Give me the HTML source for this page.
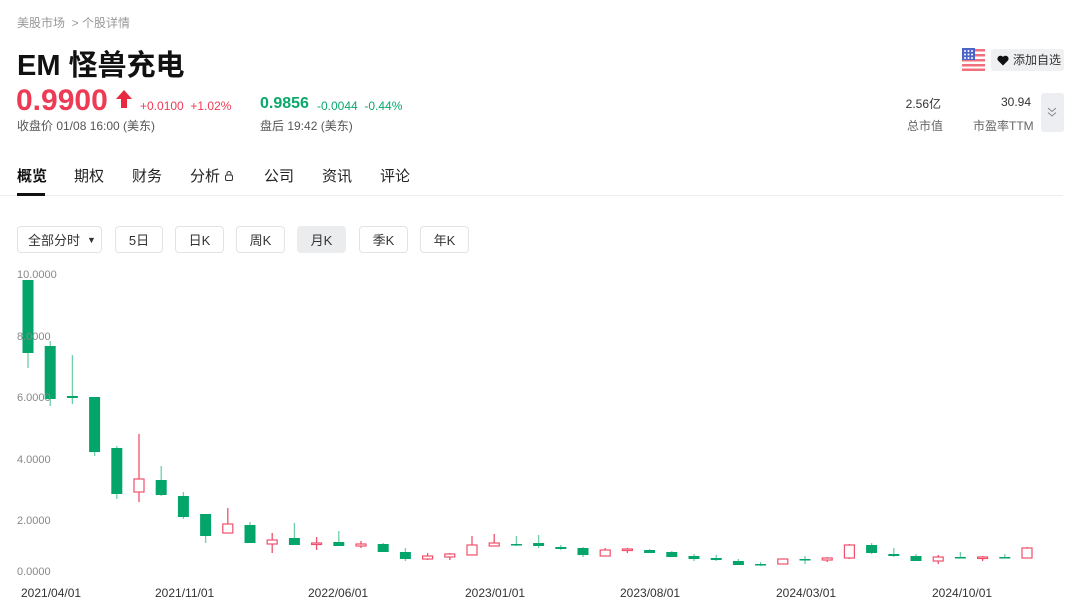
<!DOCTYPE html>
<html><head><meta charset="utf-8"><style>
*{margin:0;padding:0;box-sizing:border-box}
body{width:1080px;height:609px;overflow:hidden;background:#fff;font-family:"Liberation Sans","Noto Sans CJK SC",sans-serif;color:#222;position:relative}
.a{position:absolute;white-space:nowrap}
.bt{position:absolute;top:226px;height:27px;border:1px solid #e3e3e3;border-radius:4px;font-size:13px;color:#333;display:flex;align-items:center;justify-content:center}
.tab{position:absolute;top:165px;font-size:15px;color:#222}
</style></head><body>
<div class="a" style="left:17px;top:14px;font-size:12px;color:#999">美股市场 &nbsp;&gt; 个股详情</div>
<div class="a" style="left:17px;top:42px;font-size:29px;font-weight:bold;color:#111">EM 怪兽充电</div>
<div class="a" style="left:16px;top:84px;font-size:30px;font-weight:bold;color:#ee3b55">0.9900</div>
<svg class="a" style="left:115px;top:89px" width="18" height="20"><path d="M9 1 L17 10 H12 V19 H6 V10 H1 Z" fill="#e8283f"/></svg>
<div class="a" style="left:140px;top:99px;font-size:12px;color:#ee3b55">+0.0100 &nbsp;+1.02%</div>
<div class="a" style="left:17px;top:117px;font-size:12px;color:#555">收盘价 01/08 16:00 (美东)</div>
<div class="a" style="left:260px;top:95px;font-size:16px;font-weight:bold;color:#0aa86c">0.9856</div>
<div class="a" style="left:317px;top:99px;font-size:12px;color:#0aa86c">-0.0044 &nbsp;-0.44%</div>
<div class="a" style="left:260px;top:117px;font-size:12px;color:#555">盘后 19:42 (美东)</div>
<svg class="a" style="left:962px;top:48px" width="23" height="23"><rect width="23" height="23" rx="3" fill="#fff"/><rect y="1" width="23" height="2.5" fill="#f0707e"/><rect y="6" width="23" height="2.5" fill="#f0707e"/><rect y="11" width="23" height="2.5" fill="#f0707e"/><rect y="16" width="23" height="2.5" fill="#f0707e"/><rect y="20.5" width="23" height="2.5" fill="#f0707e"/><rect width="13" height="12" fill="#4a64c8"/><g fill="#fff"><circle cx="3" cy="3" r="1"/><circle cx="6.5" cy="3" r="1"/><circle cx="10" cy="3" r="1"/><circle cx="3" cy="6.5" r="1"/><circle cx="6.5" cy="6.5" r="1"/><circle cx="10" cy="6.5" r="1"/><circle cx="3" cy="10" r="1"/><circle cx="6.5" cy="10" r="1"/><circle cx="10" cy="10" r="1"/></g></svg>
<div class="a" style="left:991px;top:49px;width:73px;height:22px;background:#eff0f2;border-radius:3px;font-size:12px;color:#333;padding-left:22px;line-height:22px">添加自选</div>
<svg class="a" style="left:997px;top:55px" width="12" height="11"><path d="M6 10.5 L1 5.5 A2.7 2.7 0 0 1 6 2 A2.7 2.7 0 0 1 11 5.5 Z" fill="#111"/></svg>
<div class="a" style="right:139px;top:95px;font-size:12px;color:#333">2.56亿</div>
<div class="a" style="left:907px;top:117px;font-size:12px;color:#666">总市值</div>
<div class="a" style="right:49px;top:95px;font-size:12px;color:#333">30.94</div>
<div class="a" style="left:973px;top:117px;font-size:12px;color:#666">市盈率TTM</div>
<div class="a" style="left:1041px;top:93px;width:23px;height:39px;background:#eceef1;border-radius:3px"></div>
<svg class="a" style="left:1046px;top:106px" width="12" height="12"><path d="M2 2 L6 5.5 L10 2 M2 6.5 L6 10 L10 6.5" stroke="#888" fill="none" stroke-width="1"/></svg>
<div class="tab" style="left:17px;font-weight:bold;color:#111">概览</div>
<div class="tab" style="left:74px">期权</div>
<div class="tab" style="left:132px">财务</div>
<div class="tab" style="left:190px">分析</div>
<svg class="a" style="left:223px;top:170px" width="12" height="12"><rect x="2.5" y="5" width="7" height="5.5" rx="1.5" fill="none" stroke="#333"/><path d="M4 5 V3.5 A2 2 0 0 1 8 3.5 V5" fill="none" stroke="#333"/></svg>
<div class="tab" style="left:264px">公司</div>
<div class="tab" style="left:322px">资讯</div>
<div class="tab" style="left:380px">评论</div>
<div class="a" style="left:0;top:195px;width:1063px;height:1px;background:#eee"></div>
<div class="a" style="left:17px;top:193px;width:28px;height:3px;background:#111"></div>
<div class="bt" style="left:17px;width:85px;justify-content:flex-start;padding-left:10px">全部分时<span style="font-size:9px;margin-left:7px">▼</span></div>
<div class="bt" style="left:115px;width:48px">5日</div>
<div class="bt" style="left:175px;width:49px">日K</div>
<div class="bt" style="left:236px;width:49px">周K</div>
<div class="bt" style="left:297px;width:49px;background:#ebecee;border-color:#ebecee">月K</div>
<div class="bt" style="left:359px;width:49px">季K</div>
<div class="bt" style="left:420px;width:49px">年K</div>
<svg class="a" style="left:0;top:0" width="1080" height="609" id="ch"></svg>
<div class="a" style="left:17px;top:269px;font-size:11px;color:#888">10.0000</div>
<div class="a" style="left:17px;top:331px;font-size:11px;color:#888">8.0000</div>
<div class="a" style="left:17px;top:392px;font-size:11px;color:#888">6.0000</div>
<div class="a" style="left:17px;top:454px;font-size:11px;color:#888">4.0000</div>
<div class="a" style="left:17px;top:515px;font-size:11px;color:#888">2.0000</div>
<div class="a" style="left:17px;top:566px;font-size:11px;color:#888">0.0000</div>
<div class="a" style="left:21px;top:586px;font-size:12px;color:#333">2021/04/01</div>
<div class="a" style="left:155px;top:586px;font-size:12px;color:#333">2021/11/01</div>
<div class="a" style="left:308px;top:586px;font-size:12px;color:#333">2022/06/01</div>
<div class="a" style="left:465px;top:586px;font-size:12px;color:#333">2023/01/01</div>
<div class="a" style="left:620px;top:586px;font-size:12px;color:#333">2023/08/01</div>
<div class="a" style="left:776px;top:586px;font-size:12px;color:#333">2024/03/01</div>
<div class="a" style="left:932px;top:586px;font-size:12px;color:#333">2024/10/01</div>
<script>
var C=[["g",280,353,280,368],["g",346,399,341,406],["g",396,398,355,404],["g",397,452,397,456],["g",448,494,446,499],["r",479,492,434,502],["g",480,495,466,496],["g",496,517,492,519],["g",514,536,514,543],["r",524,533,508,533],["g",525,543,522,543],["r",540,544,533,553],["g",538,545,523,545],["r",543,544,537,550],["g",542,546,531,546],["r",544,546,541,548],
["g",544,552,543,552],["g",552,559,548,561],["r",556,559,553,560],["r",554,557,553,560],["r",545,555,536,555],["r",543,546,534,546],["g",544,545,536,546],["g",543,546,535,548],["g",547,549,545,550],["g",548,555,547,557],["r",550,556,548,556],["r",549,550,548,553],["g",550,553,549,553],["g",552,557,551,557],["g",556,559,554,561],["g",558,560,555,561],["g",561,565,559,565],["g",564,565,562,566],["r",559,564,559,564],["g",559,560,556,564],["r",558,560,557,562],["r",545,558,544,559],["g",545,553,543,554],["g",554,556,548,557],["g",556,561,554,561],["r",557,561,555,564],["g",557,558,552,558],["r",557,558,556,561],["g",557,558,554,558],["r",548,558,547,558]];
var s="";C.forEach(function(c,i){var x=28+i*22.2;var g=c[0]=="g";var col=g?"#03a56b":"#f0506a";var wc=g?"#6fd0a8":"#f0506a";
s+='<line x1="'+x+'" x2="'+x+'" y1="'+c[3]+'" y2="'+c[4]+'" stroke="'+wc+'" stroke-width="1.3"/>';
var h=Math.max(c[2]-c[1],1.5);
if(g)s+='<rect x="'+(x-5.5)+'" y="'+c[1]+'" width="11" height="'+h+'" fill="'+col+'"/>';
else s+='<rect x="'+(x-5)+'" y="'+c[1]+'" width="10" height="'+h+'" fill="#fff" stroke="'+col+'" stroke-width="1.2"/>';});
document.getElementById("ch").innerHTML=s;
</script>
</body></html>
